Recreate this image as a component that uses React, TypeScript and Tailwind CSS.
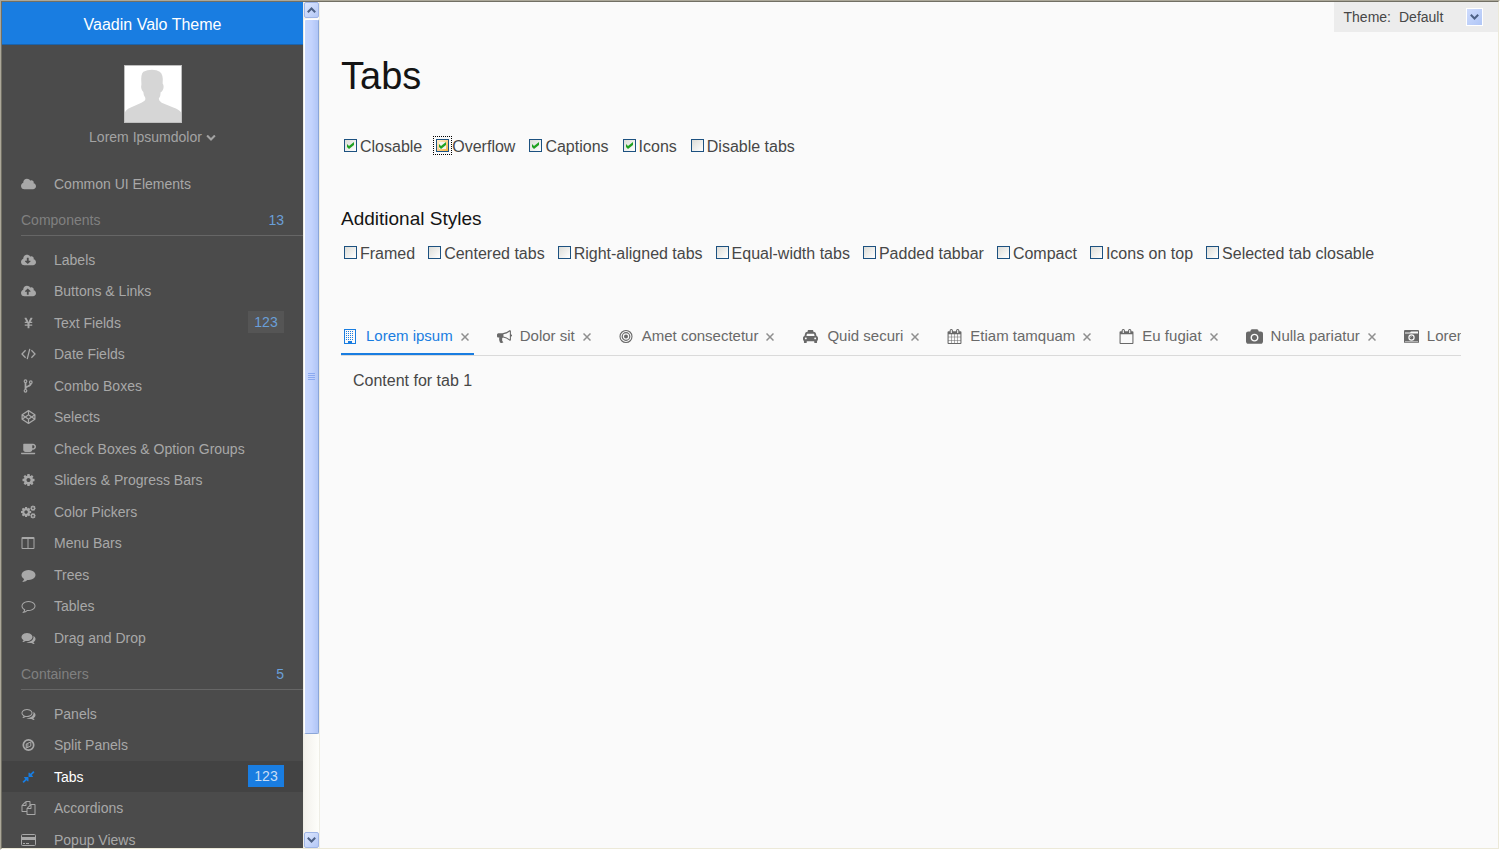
import React from "react";
import {
  FaCloud,
  FaCloudDownloadAlt,
  FaCloudUploadAlt,
  FaCodepen,
  FaCoffee,
  FaTaxi,
  FaYenSign,
} from "react-icons/fa";

type IconProps = { className?: string };
type Icon = React.ComponentType<IconProps>;

const glyph = (d: string, viewBox = "0 0 1792 1792"): Icon =>
  function Glyph({ className }: IconProps) {
    return (
      <svg viewBox={viewBox} className={className} fill="currentColor" aria-hidden="true">
        <path fillRule="evenodd" d={d} />
      </svg>
    );
  };

const ChevronDown = glyph(
  "M1683 808l-742 741q-19 19-45 19t-45-19l-742-741q-19-19-19-45.500t19-45.500l166-165q19-19 45-19t45 19l531 531 531-531q19-19 45-19t45 19l166 165q19 19 19 45.500t-19 45.500z"
);
const Files = glyph(
  "M1696 384q40 0 68 28t28 68v1216q0 40-28 68t-68 28h-960q-40 0-68-28t-28-68v-288h-544q-40 0-68-28t-28-68v-672q0-40 20-88t48-76l408-408q28-28 76-48t88-20h416q40 0 68 28t28 68v328q68-40 128-40h416zm-544 213l-299 299h299v-299zm-640-384l-299 299h299v-299zm196 647l316-316v-416h-384v416q0 40-28 68t-68 28h-416v640h512v-256q0-40 20-88t48-76zm956 804v-1152h-384v416q0 40-28 68t-68 28h-416v640h896z"
);
const Compress = glyph(
  "M896 960v448q0 26-19 45t-45 19-45-19l-144-144-332 332q-10 10-23 10t-23-10l-114-114q-10-10-10-23t10-23l332-332-144-144q-19-19-19-45t19-45 45-19h448q26 0 45 19t19 45zm755-672q0 13-10 23l-332 332 144 144q19 19 19 45t-19 45-45 19h-448q-26 0-45-19t-19-45v-448q0-26 19-45t45-19 45 19l144 144 332-332q10-10 23-10t23 10l114 114q10 10 10 23z"
);
const Columns = glyph(
  "M128 128H1536Q1664 128 1664 256V1536Q1664 1664 1536 1664H128Q0 1664 0 1536V256Q0 128 128 128zM128 384V1536H768V384zM896 384V1536H1536V384z"
);
const bubble =
  "M1792 896q0 174-120 321.500t-326 233-450 85.500q-70 0-145-8-198 175-460 242-49 14-114 22h-5q-15 0-27-10.500t-16-27.500v-1q-3-4-.5-12t2-10 4.500-9.500l6-9 7-8.500 8-9q7-8 31-34.500t34.500-38 31-39.500 32.500-51 27-59 26-76q-157-89-247.500-220t-90.500-281q0-174 120-321.500t326-233 450-85.500 450 85.500 326 233 120 321.500z";
const Comment = glyph(bubble);
const CommentOutline = glyph(
  bubble +
    "M896 384q-204 0-381.500 69.500t-282 187.500-104.500 255q0 112 71.500 213.500t201.500 175.500l87 50-27 96q-24 91-70 172 152-63 275-171l43-38 57 6q69 8 130 8 204 0 381.500-69.500t282-187.500 104.500-255-104.500-255-282-187.500-381.500-69.500z"
);
const Comments = glyph(
  "M1408 768q0 139-94 257t-256.500 186.500-353.500 68.500q-86 0-176-16-124 88-278 128-36 9-86 16h-3q-11 0-20.500-8t-11.500-21q-1-3-1-6.500t.5-6.500 2-6l2.500-5 3.500-5.500 4-5 4.500-5 4-4.500q5-6 23-25t26-29.500 22.500-29 25-38.500 20.500-44q-124-72-195-177t-71-224q0-139 94-257t256.500-186.500 353.500-68.500 353.500 68.500 256.500 186.500 94 257zm384 256q0 120-71 224.500t-195 176.500q10 24 20.500 44t25 38.500 22.500 29 26 29.500 23 25q1 1 4 4.500t4.500 5 4 5 3.500 5.500l2.500 5 2 6 .5 6.500-1 6.500q-3 14-13 22t-22 7q-50-7-86-16-154-40-278-128-90 16-176 16-271 0-472-132 58 4 88 4 161 0 309-45t264-129q125-92 192-212t67-254q0-77-23-152 129 71 204 178t75 230z"
);
const CommentsOutline = glyph(
  "M704 384q-153 0-286 52t-211.500 141-78.500 191q0 82 53 158t149 132l97 56-35 84q34-20 62-39l44-31 53 10q78 14 153 14 153 0 286-52t211.500-141 78.500-191-78.500-191-211.500-141-286-52zm0-128q191 0 353.500 68.500t256.500 186.500 94 257-94 257-256.500 186.500-353.500 68.500q-86 0-176-16-124 88-278 128-36 9-86 16h-3q-11 0-20.500-8t-11.500-21q-1-3-1-6.500t.5-6.500 2-6l2.500-5 3.500-5.500 4-5 4.500-5 4-4.500q5-6 23-25t26-29.500 22.500-29 25-38.500 20.500-44q-124-72-195-177t-71-224q0-139 94-257t256.500-186.500 353.500-68.500zm822 1169q10 24 20.500 44t25 38.500 22.500 29 26 29.500 23 25q1 1 4 4.500t4.500 5 4 5 3.500 5.500l2.500 5 2 6 .5 6.500-1 6.500q-3 14-13 22t-22 7q-50-7-86-16-154-40-278-128-90 16-176 16-271 0-472-132 58 4 88 4 161 0 309-45t264-129q125-92 192-212t67-254q0-77-23-152 129 71 204 178t75 230q0 120-71 224.500t-195 176.500z"
);
const cogPath =
  "M1152 896q0-106-75-181t-181-75-181 75-75 181 75 181 181 75 181-75 75-181zm512-109v222q0 12-8 23t-20 13l-185 28q-19 54-39 91 35 50 107 138 10 12 10 25t-9 23q-27 37-99 108t-94 71q-12 0-26-9l-138-108q-44 23-91 38-16 136-29 186-7 28-36 28h-222q-14 0-24.500-8.500t-11.500-21.500l-28-184q-49-16-90-37l-141 107q-10 9-25 9-14 0-25-11-126-114-165-168-7-10-7-23 0-12 8-23 15-21 51-66.500t54-70.500q-27-50-41-99l-183-27q-13-2-21-12.500t-8-23.500v-222q0-12 8-23t19-13l186-28q14-46 39-92-40-57-107-138-10-12-10-24 0-10 9-23 26-36 98.500-107.500t94.500-71.500q13 0 26 10l138 107q44-23 91-38 16-136 29-186 7-28 36-28h222q14 0 24.500 8.500t11.500 21.500l28 184q49 16 90 37l142-107q9-9 24-9 13 0 25 10 129 119 165 170 7 8 7 22 0 12-8 23-15 21-51 66.500t-54 70.500q26 50 41 98l183 28q13 2 21 12.500t8 23.500z";
const Cog = glyph(cogPath, "128 128 1536 1536");

function Cogs({ className }: IconProps) {
  return (
    <svg viewBox="0 0 1920 1792" className={className} fill="currentColor" aria-hidden="true">
      <path fillRule="evenodd" d={cogPath} transform="translate(-110 136) scale(.85)" />
      <path fillRule="evenodd" d={cogPath} transform="translate(1120 0) scale(.46)" />
      <path fillRule="evenodd" d={cogPath} transform="translate(1120 968) scale(.46)" />
    </svg>
  );
}

function Code({ className }: IconProps) {
  return (
    <svg viewBox="0 0 15 14" className={className} fill="none" stroke="currentColor" strokeWidth="1.300" aria-hidden="true">
      <path d="M4.600 3.300L1 7L4.600 10.700M10.400 3.300L14 7L10.400 10.700M8.800 1.800L6.200 12.200" />
    </svg>
  );
}

function Fork({ className }: IconProps) {
  return (
    <svg viewBox="0 0 15 14" className={className} fill="none" stroke="currentColor" strokeWidth="1.200" aria-hidden="true">
      <circle cx="4.500" cy="2.200" r="1.300" />
      <circle cx="4.500" cy="11.800" r="1.300" />
      <circle cx="9.800" cy="3.200" r="1.300" />
      <path strokeWidth="1.800" d="M4.500 3.400V10.600M9.800 4.500C9.800 7.900 4.700 6.600 4.500 9.500" />
    </svg>
  );
}

function Compass({ className }: IconProps) {
  return (
    <svg viewBox="0 0 14 14" className={className} fill="none" stroke="currentColor" aria-hidden="true">
      <circle cx="7" cy="7" r="5.200" strokeWidth="1.700" />
      <path strokeWidth="1" d="M9.300 3.900V8L4.700 10.100V6z" />
      <path fill="currentColor" stroke="none" d="M4.700 6L7 5v4L4.700 10.100z" opacity=".6" />
    </svg>
  );
}

function CreditCard({ className }: IconProps) {
  return (
    <svg viewBox="0 0 15 14" className={className} aria-hidden="true">
      <rect x=".5" y="1.500" width="14" height="11" rx="1" fill="none" stroke="currentColor" />
      <path fill="currentColor" d="M1 4h13v3H1zM2 10h2v1H2zM5 10h3v1H5z" />
    </svg>
  );
}

function Building({ className }: IconProps) {
  return (
    <svg viewBox="0 0 15 15" className={className} aria-hidden="true">
      <path
        fill="currentColor"
        fillRule="evenodd"
        d="M1 0h12v15H1zM2 1v13h3v-2h4v2h3V1z"
      />
      <path
        stroke="currentColor"
        strokeWidth="1"
        strokeDasharray="1 1"
        d="M3 2.500h8M3 4.500h8M3 6.500h8M3 8.500h8M3 10.500h8"
      />
    </svg>
  );
}

const Bullhorn = glyph(
  "M1664 640q53 0 90.500 37.500t37.500 90.500-37.500 90.500-90.500 37.500v384q0 52-38 90t-90 38q-417-347-812-380-58 19-91 66t-31 100.500 40 92.500q-20 33-23 65.500t6 58 33.500 55 48 50 61.500 50.500q-29 58-111.500 83t-168.500 11.500-132-55.500q-7-23-29.500-87.500t-32-94.500-23-89-15-101 3.500-98.500 22-110.500h-122q-66 0-113-47t-47-113v-192q0-66 47-113t113-47h480q435 0 896-384 52 0 90 38t38 90v384zm-128 604v-954q-394 302-768 343v270q377 42 768 341z"
);

function Bullseye({ className }: IconProps) {
  return (
    <svg viewBox="0 0 15 15" className={className} fill="none" stroke="currentColor" aria-hidden="true">
      <circle cx="7" cy="7.500" r="6" strokeWidth="1.100" />
      <circle cx="7" cy="7.500" r="3.800" strokeWidth="1.200" />
      <circle cx="7" cy="7.500" r="2" fill="currentColor" stroke="none" />
    </svg>
  );
}

const calendarFrame =
  "M576 448v-288q0-13-9.500-22.500t-22.500-9.500h-64q-13 0-22.500 9.500t-9.500 22.500v288q0 13 9.500 22.500t22.500 9.500h64q13 0 22.500-9.500t9.500-22.500zm768 0v-288q0-13-9.500-22.500t-22.500-9.500h-64q-13 0-22.500 9.500t-9.500 22.500v288q0 13 9.500 22.500t22.500 9.500h64q13 0 22.500-9.500t9.500-22.500zm384-64v1280q0 52-38 90t-90 38h-1408q-52 0-90-38t-38-90v-1280q0-52 38-90t90-38h128v-96q0-66 47-113t113-47h64q66 0 113 47t47 113v96h384v-96q0-66 47-113t113-47h64q66 0 113 47t47 113v96h128q52 0 90 38t38 90z";
const Calendar = glyph(
  calendarFrame +
    "M192 1664h288v-288h-288zM544 1664h320v-288h-320zM928 1664h320v-288h-320zM1312 1664h288v-288h-288zM192 1312h288v-320h-288zM544 1312h320v-320h-320zM928 1312h320v-320h-320zM1312 1312h288v-320h-288zM192 928h288v-288h-288zM544 928h320v-288h-320zM928 928h320v-288h-320zM1312 928h288v-288h-288z"
);
const CalendarOutline = glyph(calendarFrame + "M192 1664h1408v-1024h-1408z");
const Camera = glyph(
  "M960 672q119 0 203.500 84.500t84.500 203.500-84.500 203.500-203.500 84.500-203.500-84.500-84.500-203.500 84.500-203.500 203.500-84.500zm704-416q106 0 181 75t75 181v896q0 106-75 181t-181 75h-1408q-106 0-181-75t-75-181v-896q0-106 75-181t181-75h224l51-136q19-49 69.500-84.500t103.500-35.500h512q53 0 103.500 35.500t69.500 84.500l51 136h224zm-704 1152q185 0 316.500-131.500t131.500-316.500-131.500-316.500-316.500-131.500-316.500 131.500-131.500 316.500 131.500 316.500 316.500 131.500z",
  "0 0 1920 1664"
);

function CameraRetro({ className }: IconProps) {
  return (
    <svg viewBox="0 0 15 14" className={className} aria-hidden="true">
      <path
        fill="currentColor"
        fillRule="evenodd"
        d="M1 .5h13a1 1 0 0 1 1 1v11a1 1 0 0 1-1 1H1a1 1 0 0 1-1-1v-11a1 1 0 0 1 1-1zM1 3V4H14V2H7L6 3zM1 12v.8h13V12z"
      />
      <circle cx="7.500" cy="8" r="2.600" fill="none" stroke="#fafafa" strokeWidth="1.200" />
      <path d="M6.500 8a1 1 0 0 1 1-1" fill="none" stroke="#fafafa" strokeWidth=".6" />
    </svg>
  );
}

type NavItem = { label: string; icon: Icon; badge?: string; active?: boolean };

const components: NavItem[] = [
  { label: "Labels", icon: FaCloudDownloadAlt },
  { label: "Buttons & Links", icon: FaCloudUploadAlt },
  { label: "Text Fields", icon: FaYenSign, badge: "123" },
  { label: "Date Fields", icon: Code },
  { label: "Combo Boxes", icon: Fork },
  { label: "Selects", icon: FaCodepen },
  { label: "Check Boxes & Option Groups", icon: FaCoffee },
  { label: "Sliders & Progress Bars", icon: Cog },
  { label: "Color Pickers", icon: Cogs },
  { label: "Menu Bars", icon: Columns },
  { label: "Trees", icon: Comment },
  { label: "Tables", icon: CommentOutline },
  { label: "Drag and Drop", icon: Comments },
];

const containers: NavItem[] = [
  { label: "Panels", icon: CommentsOutline },
  { label: "Split Panels", icon: Compass },
  { label: "Tabs", icon: Compress, badge: "123", active: true },
  { label: "Accordions", icon: Files },
  { label: "Popup Views", icon: CreditCard },
];

const tabs: { label: string; icon: Icon; wide?: boolean }[] = [
  { label: "Lorem ipsum", icon: Building },
  { label: "Dolor sit", icon: Bullhorn },
  { label: "Amet consectetur", icon: Bullseye },
  { label: "Quid securi", icon: FaTaxi, wide: true },
  { label: "Etiam tamquam", icon: Calendar },
  { label: "Eu fugiat", icon: CalendarOutline },
  { label: "Nulla pariatur", icon: Camera, wide: true },
  { label: "Lorem ipsum", icon: CameraRetro },
];

function NavLink({ item }: { item: NavItem }) {
  const ItemIcon = item.icon;
  const small = item.icon === Cog || item.icon === FaYenSign;
  return (
    <li className="odd:h-[31px] even:h-8">
      <a
        href="#"
        className={
          "flex h-full items-center px-[19px] " +
          (item.active ? "bg-[#434343] text-white" : "text-[#a8a8a8]")
        }
      >
        <span className="flex w-[33px] shrink-0">
          <ItemIcon
            className={
              "w-[15px] " + (small ? "h-3 " : "h-[14px] ") + (item.active ? "text-[#197de1]" : "")
            }
          />
        </span>
        <span className="grow pt-px">{item.label}</span>
        {item.badge && (
          <span
            className={
              "mt-1 min-w-9 self-start text-center leading-[22px] " +
              (item.active ? "bg-[#197de1] text-[#c8def5]" : "bg-[#555555] text-[#6a9fd8]")
            }
          >
            {item.badge}
          </span>
        )}
      </a>
    </li>
  );
}

function NavSection({ title, count, items }: { title: string; count: number; items: NavItem[] }) {
  return (
    <section>
      <h2 className="mt-[9px] mb-2 ml-[19px] flex justify-between border-b border-[#666666] pr-[19px] pb-[3px] leading-6 text-[#808080]">
        <span>{title}</span>
        <span className="text-[#6a9fd8]">{count}</span>
      </h2>
      <ul>
        {items.map((item) => (
          <NavLink key={item.label} item={item} />
        ))}
      </ul>
    </section>
  );
}

function ScrollArrow({ up = false }: { up?: boolean }) {
  return (
    <button
      type="button"
      aria-label={up ? "Scroll up" : "Scroll down"}
      className="flex h-4 w-[15px] shrink-0 items-center justify-center rounded-[2px] border border-[#9fb5e6] bg-gradient-to-br from-[#dde7fe] to-[#b4c8f6] text-[#4d6185]"
    >
      <svg viewBox="0 0 9 6" className="w-[9px]" fill="none" stroke="currentColor" strokeWidth="2" aria-hidden="true">
        <path d={up ? "M.8 5.200L4.500 1.500L8.200 5.200" : "M.8 .8L4.500 4.500L8.200 .8"} />
      </svg>
    </button>
  );
}

function ScrollBar() {
  return (
    <div className="flex w-[17px] shrink-0 flex-col items-center border-x border-[#eeede5] bg-gradient-to-r from-[#f3f1ec] to-[#fefefb]">
      <ScrollArrow up />
      <div className="mt-px flex w-[15px] flex-[715] items-center justify-center rounded-[2px] border border-t-white border-r-[#8ba6d8] border-b-[#8ba6d8] border-l-white bg-gradient-to-r from-[#c9d8fc] via-[#c3d3fd] to-[#b0c5f6]">
        <div className="flex flex-col gap-px">
          {[0, 1, 2, 3].map((line) => (
            <span key={line} className="block h-px w-[7px] bg-[#8caaf0]" />
          ))}
        </div>
      </div>
      <div className="flex-[98]" />
      <ScrollArrow />
    </div>
  );
}

function Check({ label, checked = false, focused = false }: { label: string; checked?: boolean; focused?: boolean }) {
  return (
    <label className="flex items-center gap-[3px] whitespace-nowrap">
      <span
        className={
          "relative mb-[3px] flex h-[13px] w-[13px] shrink-0 " +
          (focused ? "outline-1 outline-offset-2 outline-black outline-dotted" : "")
        }
      >
        <input
          type="checkbox"
          defaultChecked={checked}
          className={
            "peer h-[13px] w-[13px] appearance-none border border-[#1c5180] bg-gradient-to-br " +
            (focused ? "from-[#fff0cf] to-[#f8b330]" : "from-[#dcdcd7] to-white")
          }
        />
        <svg
          viewBox="0 0 13 13"
          className="pointer-events-none absolute inset-0 hidden peer-checked:block"
          aria-hidden="true"
        >
          {focused && <path fill="#f4f3ee" d="M3 3h7v7H3z" />}
          <path fill="#21a121" d="M3 5l2 2 5-4v3L5 10 3 8z" />
        </svg>
      </span>
      {label}
    </label>
  );
}

const styleOptions = [
  "Framed",
  "Centered tabs",
  "Right-aligned tabs",
  "Equal-width tabs",
  "Padded tabbar",
  "Compact",
  "Icons on top",
  "Selected tab closable",
];

export default function App() {
  return (
    <div className="h-screen border border-t-[#aca899] border-r-white border-b-white border-l-[#aca899]">
      <div className="flex h-full border border-t-[#716f64] border-r-[#ece9d8] border-b-[#ece9d8] border-l-[#716f64] bg-[#fafafa] font-['Liberation_Sans',Arial,sans-serif] text-base text-[#474747]">
        <aside className="flex w-[318px] shrink-0">
          <div className="flex min-w-0 grow flex-col overflow-hidden bg-[#4b4b4b] text-[14px]">
            <div className="flex h-[43px] shrink-0 items-center justify-center border-b border-[#1b63ab] bg-[#197de1] pt-[3px] text-base text-white">
              Vaadin Valo Theme
            </div>
            <div className="mt-5 flex flex-col items-center">
              <svg viewBox="0 0 58 58" className="h-[58px] w-[58px] border border-[#bfbfbf] bg-white" role="img" aria-label="User">
                <path
                  fill="#d6d6d6"
                  d="M0 58V48Q1 45 6 43L17 38Q22 36 21 33Q19 30 19 27Q16 24 17 19L17 18Q16 9 19 6Q23 4 28 4Q33 4 36 6Q40 9 39 18Q41 21 39 25Q38 27 37 27Q37 31 35 34Q35 36 38 38L50 43Q56 45 58 48V58z"
                />
              </svg>
              <button type="button" className="mt-0.5 flex items-center gap-1 leading-6 text-[#a3a3a3]">
                Lorem Ipsumdolor
                <ChevronDown className="h-[10px] w-[10px]" />
              </button>
            </div>
            <nav className="mt-[19px]">
              <ul>
                <NavLink item={{ label: "Common UI Elements", icon: FaCloud }} />
              </ul>
              <NavSection title="Components" count={13} items={components} />
              <NavSection title="Containers" count={5} items={containers} />
            </nav>
          </div>
          <ScrollBar />
        </aside>

        <main className="relative min-w-0 grow pr-[37px] pl-[21px]">
          <div className="absolute top-0 right-0 flex h-[30px] items-center bg-[#ececec] pr-[15px] pl-[10px] text-[14px]">
            <label htmlFor="theme">Theme:</label>
            <div className="relative ml-2 flex items-center">
              <select id="theme" defaultValue="Default" className="w-[84px] appearance-none bg-transparent">
                <option>Default</option>
              </select>
              <span className="pointer-events-none absolute right-0 flex h-[18px] w-[17px] items-center justify-center border border-white bg-gradient-to-br from-[#cfdcfd] to-[#b0c6f6]">
                <svg viewBox="0 0 9 6" className="w-[9px]" fill="none" stroke="#4d6185" strokeWidth="2" aria-hidden="true">
                  <path d="M.8 .8L4.500 4.500L8.200 .8" />
                </svg>
              </span>
            </div>
          </div>

          <h1 className="mt-12 text-[38px] leading-[52px] text-[#141414]">Tabs</h1>

          <div className="mt-[33px] flex gap-[14px] pl-[3px] leading-6">
            <Check label="Closable" checked />
            <Check label="Overflow" checked focused />
            <Check label="Captions" checked />
            <Check label="Icons" checked />
            <Check label="Disable tabs" />
          </div>

          <h2 className="mt-12 text-[19px] leading-6 text-[#141414]">Additional Styles</h2>
          <div className="mt-[11px] flex gap-[13px] pl-[3px] leading-6">
            {styleOptions.map((option) => (
              <Check key={option} label={option} />
            ))}
          </div>

          <div className="mt-[53px]">
            <div role="tablist" className="flex h-[37px] gap-[21px] overflow-hidden border-b border-[#dadada] text-[15px] text-[#696969]">
              {tabs.map(({ label, icon: TabIcon, wide }, index) => (
                <div
                  key={index}
                  className={
                    "flex shrink-0 items-center border-b-2 pr-[5px] pl-[2px] " +
                    (index === 0 ? "border-[#197de1] text-[#197de1]" : "border-transparent")
                  }
                >
                  <button type="button" role="tab" aria-selected={index === 0} className="flex items-center gap-2">
                    <TabIcon className={"h-[15px] " + (wide ? "w-[17px]" : "w-[15px]")} />
                    {label}
                  </button>
                  <button type="button" aria-label={"Close " + label} className="mt-0.5 ml-2 flex text-[#8f8f8f]">
                    <svg viewBox="0 0 8 8" className="h-2 w-2" stroke="currentColor" strokeWidth="1.500" aria-hidden="true">
                      <path d="M.5 .5L7.500 7.500M7.500 .5L.5 7.500" />
                    </svg>
                  </button>
                </div>
              ))}
            </div>
            <div role="tabpanel" className="px-3 pt-[13px] leading-6">
              Content for tab 1
            </div>
          </div>
        </main>
      </div>
    </div>
  );
}
